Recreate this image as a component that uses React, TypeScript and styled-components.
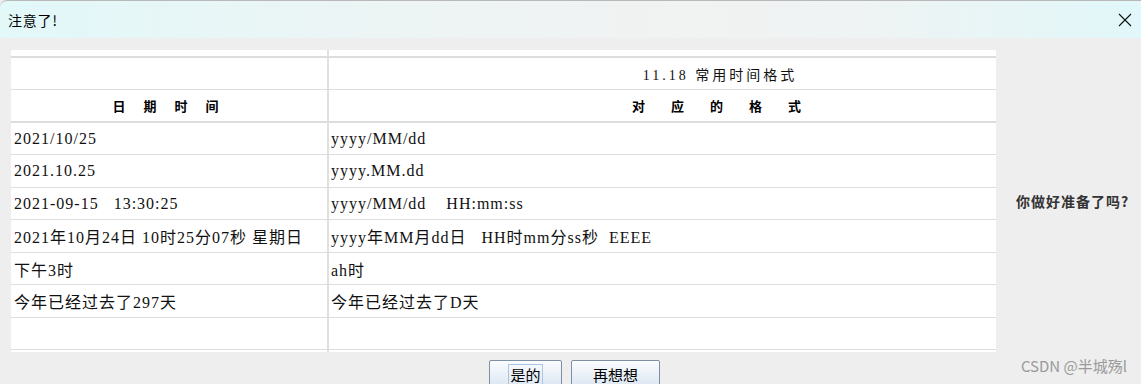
import React from 'react'
import styled, { createGlobalStyle } from 'styled-components'

const GlobalStyle = createGlobalStyle`
  html, body {
    margin: 0;
    padding: 0;
    background: #ffffff;
    overflow: hidden;
  }
`

const SERIF = `"Liberation Serif", "Noto Sans CJK SC", serif`
const SANS = `"Noto Sans CJK SC", "Liberation Sans", sans-serif`

const Window = styled.div`
  position: relative;
  width: 1141px;
  height: 384px;
  background: #eeeeee;
  overflow: hidden;
  display: flex;
  flex-direction: column;
`

const TitleBar = styled.div`
  height: 37px;
  flex-shrink: 0;
  border-top: 1px solid #b8b8b8;
  border-top-left-radius: 7px;
  background: linear-gradient(90deg, #e2f8f9 0%, #edf4f4 35%, #f1f2f2 60%, #eff3f3 75%, #e1f7f9 100%);
  display: flex;
  align-items: center;
  justify-content: space-between;
  padding: 0 4px 0 8px;
`

const Title = styled.span`
  font-family: ${SANS};
  font-size: 14px;
  color: #000;
  letter-spacing: 0.8px;
`

const CloseButton = styled.button`
  width: 24px;
  height: 24px;
  border: none;
  background: transparent;
  padding: 0;
  display: flex;
  align-items: center;
  justify-content: center;
`

const Main = styled.div`
  display: flex;
  margin-top: 12px;
  padding-left: 11px;
`

const Panel = styled.div`
  width: 985px;
  background: #ffffff;
  overflow: hidden;
  flex-shrink: 0;
`

const Table = styled.div`
  width: 1100px;
  display: flex;
  flex-direction: column;
`

const Row = styled.div<{ $h: number; $line: number }>`
  display: grid;
  grid-template-columns: 318px 782px;
  height: ${p => p.$h}px;
  border-bottom: ${p => p.$line}px solid #dddddd;
`

const Cell = styled.div<{ $left?: boolean; $center?: boolean }>`
  box-sizing: border-box;
  display: flex;
  align-items: center;
  justify-content: ${p => (p.$center ? 'center' : 'flex-start')};
  padding-left: ${p => (p.$center ? 0 : p.$left ? 3 : 2)}px;
  border-right: ${p => (p.$left ? '2px solid #e0e0e0' : 'none')};
  font-family: ${SERIF};
  font-size: 16px;
  letter-spacing: 1px;
  color: #111;
  white-space: pre;
  overflow: hidden;
`

const Caption = styled.span`
  font-family: ${SERIF};
  font-size: 14px;
  letter-spacing: 3px;
  color: #111;
`

const HeadText = styled.span<{ $gap: number }>`
  font-family: ${SANS};
  font-weight: 700;
  font-size: 13px;
  letter-spacing: 7px;
  word-spacing: ${p => p.$gap}px;
  color: #000;
  white-space: pre;
`

const Side = styled.div`
  flex: 1;
  display: flex;
  align-items: center;
  padding-left: 20px;
`

const Question = styled.span`
  font-family: ${SANS};
  font-weight: 700;
  font-size: 14px;
  letter-spacing: 1px;
  color: #333;
`

const Buttons = styled.div`
  display: flex;
  justify-content: center;
  gap: 9px;
  margin-top: 8px;
  padding-left: 8px;
`

const DialogButton = styled.button<{ $w: number }>`
  width: ${p => p.$w}px;
  height: 28px;
  box-sizing: border-box;
  border: 1px solid #7d8fa3;
  border-radius: 2px;
  background: linear-gradient(180deg, #fbfdff 0%, #eaf1f8 50%, #dbe6f2 100%);
  font-family: ${SANS};
  font-size: 15px;
  color: #000;
  padding: 0;
  display: flex;
  justify-content: center;
  align-items: flex-start;
  padding-top: 3px;
`

const FocusRing = styled.span<{ $on?: boolean }>`
  border: 1px solid ${p => (p.$on ? '#a9c5e2' : 'transparent')};
  padding: 0 1px;
  line-height: 20px;
`

const Watermark = styled.div`
  position: absolute;
  right: 14px;
  bottom: 8px;
  font-family: ${SANS};
  font-size: 15px;
  color: #9a9a9a;
`

const rows: { h: number; left: string; right: string }[] = [
  { h: 31, left: '2021/10/25', right: 'yyyy/MM/dd' },
  { h: 32, left: '2021.10.25', right: 'yyyy.MM.dd' },
  { h: 31, left: '2021-09-15   13:30:25', right: 'yyyy/MM/dd    HH:mm:ss' },
  { h: 32, left: '2021年10月24日 10时25分07秒 星期日', right: 'yyyy年MM月dd日   HH时mm分ss秒  EEEE' },
  { h: 31, left: '下午3时', right: 'ah时' },
  { h: 32, left: '今年已经过去了297天', right: '今年已经过去了D天' },
  { h: 31, left: '', right: '' },
]

const App = () => {
  return (
    <>
      <GlobalStyle />
      <Window>
        <TitleBar>
          <Title>注意了!</Title>
          <CloseButton>
            <svg width="14" height="14" viewBox="0 0 14 14">
              <path d="M1 1 L13 13 M13 1 L1 13" stroke="#111" strokeWidth="1.1" fill="none" />
            </svg>
          </CloseButton>
        </TitleBar>
        <Main>
          <Panel>
            <Table>
              <Row $h={6} $line={2}>
                <Cell $left />
                <Cell />
              </Row>
              <Row $h={31} $line={1}>
                <Cell $left />
                <Cell $center>
                  <Caption>11.18 常用时间格式</Caption>
                </Cell>
              </Row>
              <Row $h={31} $line={2}>
                <Cell $left $center>
                  <HeadText $gap={1}>日 期 时 间</HeadText>
                </Cell>
                <Cell $center>
                  <HeadText $gap={9}>对 应 的 格 式</HeadText>
                </Cell>
              </Row>
              {rows.map((r, i) => (
                <Row key={i} $h={r.h} $line={1}>
                  <Cell $left>{r.left}</Cell>
                  <Cell>{r.right}</Cell>
                </Row>
              ))}
              <Row $h={2} $line={0}>
                <Cell $left />
                <Cell />
              </Row>
            </Table>
          </Panel>
          <Side>
            <Question>你做好准备了吗?</Question>
          </Side>
        </Main>
        <Buttons>
          <DialogButton $w={73}>
            <FocusRing $on>是的</FocusRing>
          </DialogButton>
          <DialogButton $w={89}>
            <FocusRing>再想想</FocusRing>
          </DialogButton>
        </Buttons>
        <Watermark>CSDN @半城殇l</Watermark>
      </Window>
    </>
  )
}

export default App
